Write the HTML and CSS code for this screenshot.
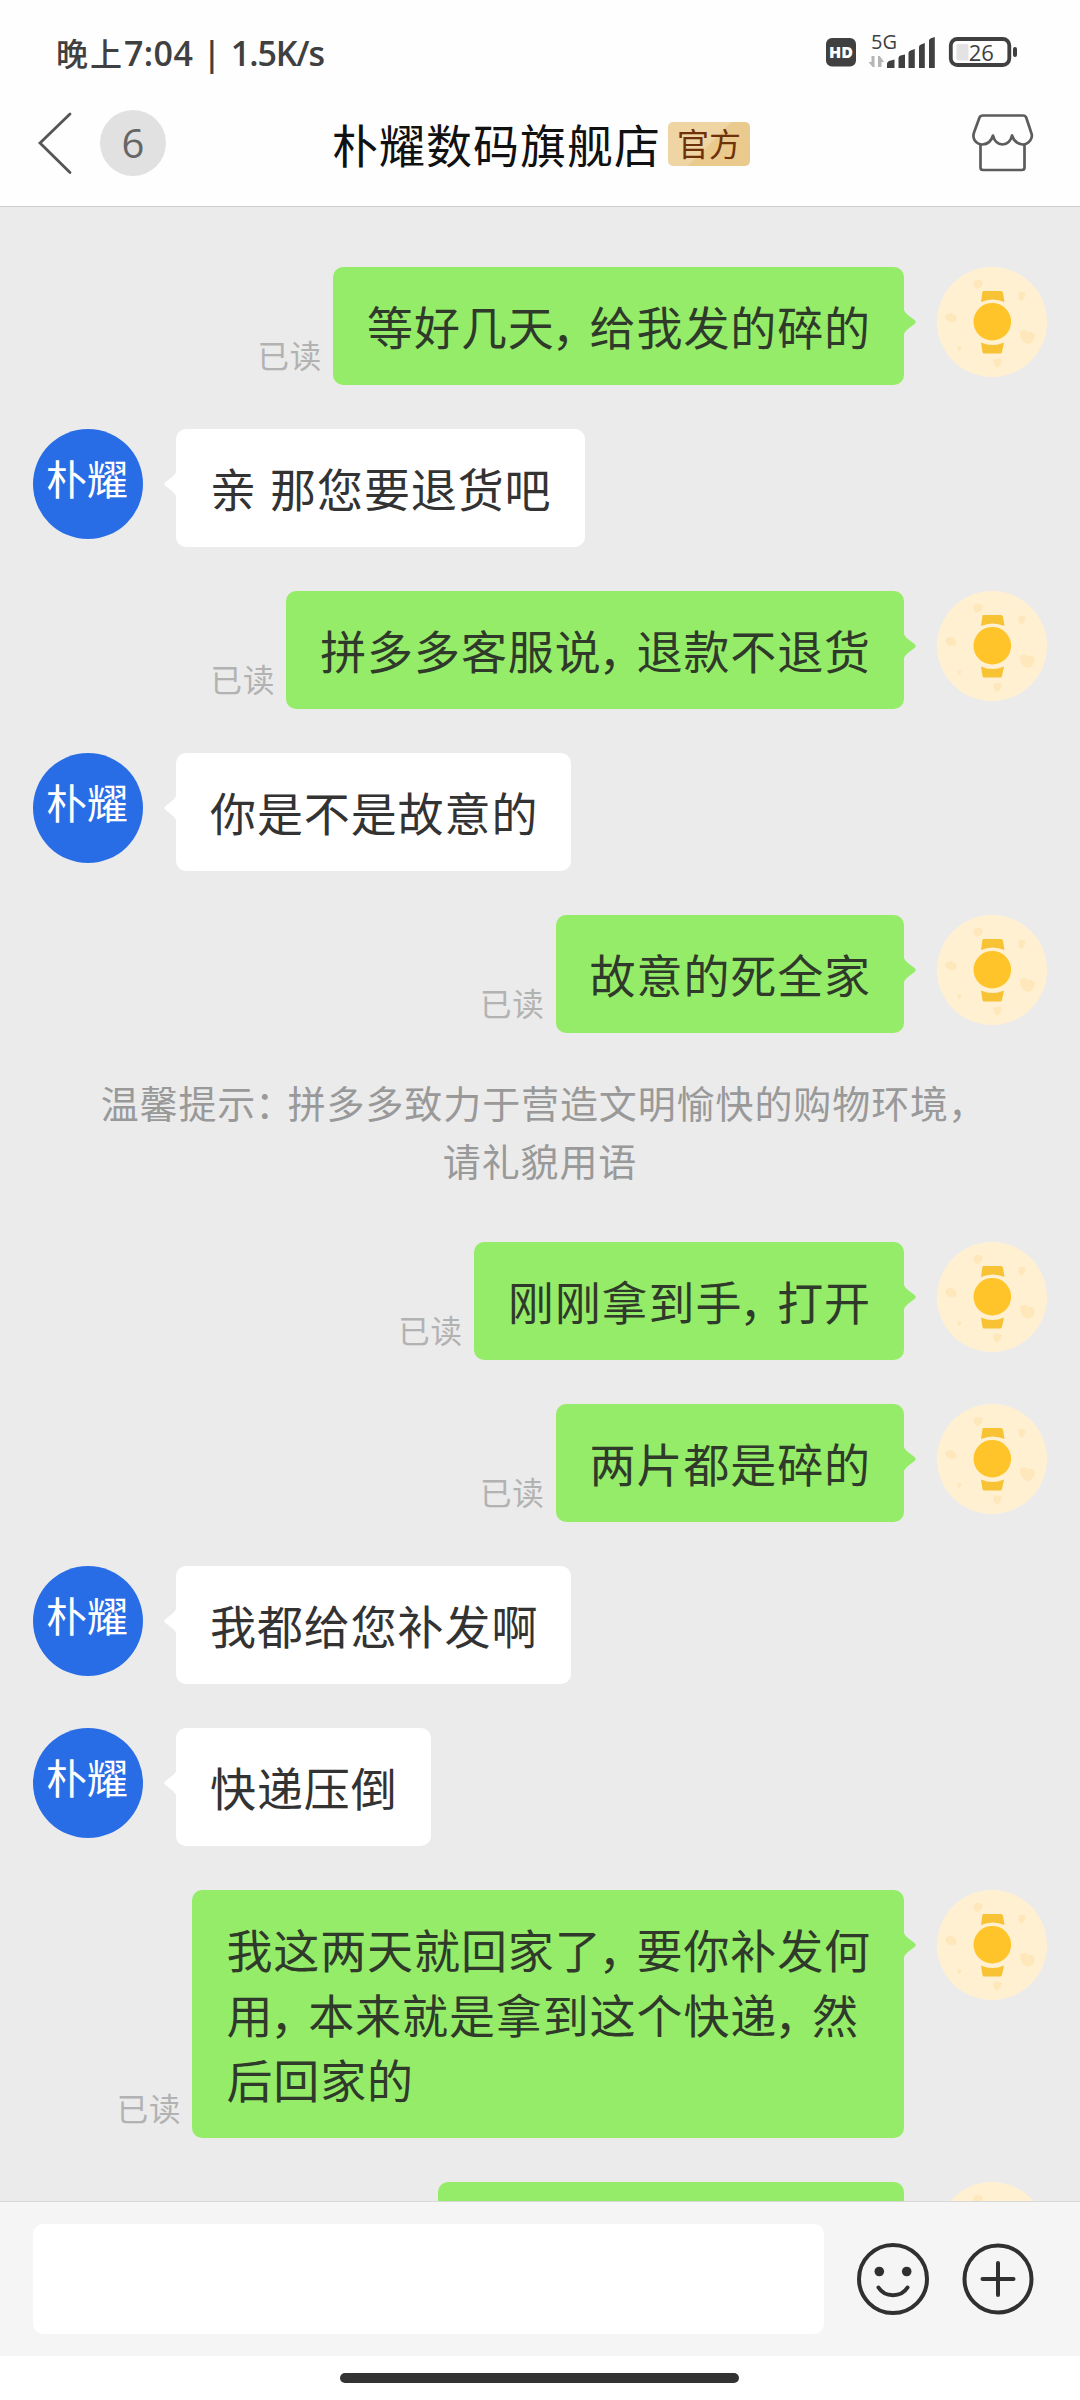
FILE: index.html
```html
<!DOCTYPE html>
<html lang="zh-CN">
<head>
<meta charset="utf-8">
<title>朴耀数码旗舰店</title>
<link rel="stylesheet" href="styles.css">
</head>
<body>
<svg class="defs" width="0" height="0" aria-hidden="true">
  <symbol id="watch" viewBox="0 0 110 110">
    <circle cx="55" cy="55" r="55" fill="#fff0d2"/>
    <g fill="#fee8bb">
      <path d="M37 14q5-3 9 1q-1 6-6 7q-5-3-3-8z"/>
      <path d="M82 25q4-1 7 1q-1 6-5 8q-4-4-2-9z"/>
      <path d="M8 49q5-6 11 0q2 6-4 6q-6 0-7-6z"/>
      <path d="M83 65q4-4 8 0q6-1 7 4q-1 7-8 8q-8-4-7-12z"/>
      <path d="M20 79l5 1l-3 5z"/>
      <path d="M56 93q5-3 9 0q-1 6-5 8q-4-3-4-8z"/>
    </g>
    <path d="M46 24h18q1.500 0 2 2l1.500 9q-12-5-23.500 0l1.300-9q.3-2 .7-2zM44 75.500q11.500 5 23 0l-2 9.500q-.5 1.500-1.500 1.500h-16.500q-1 0-1.500-1.500z" fill="#f7c234"/>
    <circle cx="55.300" cy="54.700" r="18.800" fill="#fec42a"/>
  </symbol>
</svg>

<header class="top">
  <div class="status">
    <div class="clock"><span class="cjk">晚上</span>7:04 | <span class="speed">1.5K/s</span></div>
    <svg class="indicators" width="194" height="60" viewBox="825 22 194 60">
      <rect x="826" y="38" width="30" height="28.500" rx="6" fill="#404040"/>
      <text x="841" y="58" class="hd" text-anchor="middle">HD</text>
      <text x="871" y="48.500" class="net">5G</text>
      <path d="M874.500 56v11h-1.800l-4.200-5h3v-6zM878 67v-11h1.800l4.200 6h-2.500v-1.500v6.500z" fill="#b5b5b5"/>
      <path d="M887 68v-4q0-2 2-3l5.500-1.500V68zM898.500 68V58q0-2 2-2.500l4.500-1V68zM908.500 68V53q0-2 2-2.500l4.300-1.500V68zM919 68V47q0-2 2-2.500l3.800-1.500V68zM929 68V40.500q0-1.500 2-2.200l3.800-1.300V68z" fill="#404040"/>
      <rect x="956.500" y="44" width="12" height="16.500" rx="2" fill="#e3e3e3"/>
      <rect x="950.800" y="39" width="58.500" height="26" rx="6.500" fill="none" stroke="#404040" stroke-width="3.800"/>
      <rect x="1013" y="47" width="4" height="10" rx="2" fill="#404040"/>
      <text x="981.300" y="61" class="pct" text-anchor="middle">26</text>
    </svg>
  </div>
  <div class="nav">
    <div class="back">
      <svg width="36" height="66" viewBox="37 110 36 66"><path d="M70 114L40 143l30 29.500" fill="none" stroke="#555" stroke-width="2.800" stroke-linecap="round"/></svg>
      <span class="unread">6</span>
    </div>
    <h1 class="title">朴耀数码旗舰店</h1>
    <span class="official">官方</span>
    <svg class="shop" width="64" height="62" viewBox="971 112 64 62" fill="none" stroke="#5c5c5c" stroke-width="2.700" stroke-linejoin="round">
      <path d="M983 115.500h40q2.500 0 3.200 2l4.800 14.500q2 4.500-.5 8q-3 4.500-8 4.500q-8-1-10.500-9q-2 8.500-9.500 9q-7.500-.5-9.500-9q-2.500 8.500-10.500 9q-5 0-8-4.500q-2-3.500-.3-8l5.300-14.500q.8-2 3.500-2z"/>
      <path d="M980.500 144v23.500q0 2.500 2.500 2.500h39q2.500 0 2.500-2.500V144"/>
    </svg>
  </div>
</header>

<main class="chat">
  <div class="row me"><span class="read">已读</span><div class="bubble">等好几天<i>，</i>给我发的碎的</div><svg class="avatar"><use href="#watch"/></svg></div>
  <div class="row shopkeeper"><div class="avatar logo">朴耀</div><div class="bubble">亲 那您要退货吧</div></div>
  <div class="row me"><span class="read">已读</span><div class="bubble">拼多多客服说<i>，</i>退款不退货</div><svg class="avatar"><use href="#watch"/></svg></div>
  <div class="row shopkeeper"><div class="avatar logo">朴耀</div><div class="bubble">你是不是故意的</div></div>
  <div class="row me"><span class="read">已读</span><div class="bubble">故意的死全家</div><svg class="avatar"><use href="#watch"/></svg></div>
  <p class="tip">温馨提示<i>：</i>拼多多致力于营造文明愉快的购物环境<i>，</i><br>请礼貌用语</p>
  <div class="row me"><span class="read">已读</span><div class="bubble">刚刚拿到手<i>，</i>打开</div><svg class="avatar"><use href="#watch"/></svg></div>
  <div class="row me"><span class="read">已读</span><div class="bubble">两片都是碎的</div><svg class="avatar"><use href="#watch"/></svg></div>
  <div class="row shopkeeper"><div class="avatar logo">朴耀</div><div class="bubble">我都给您补发啊</div></div>
  <div class="row shopkeeper"><div class="avatar logo">朴耀</div><div class="bubble">快递压倒</div></div>
  <div class="row me"><span class="read">已读</span><div class="bubble">我这两天就回家了<i>，</i>要你补发何<br>用<i>，</i>本来就是拿到这个快递<i>，</i>然<br>后回家的</div><svg class="avatar"><use href="#watch"/></svg></div>
  <div class="row me"><div class="bubble partial"></div><svg class="avatar"><use href="#watch"/></svg></div>
</main>

<footer class="composer">
  <div class="field"></div>
  <svg width="72" height="72" viewBox="-36 -36 72 72" fill="none" stroke="#303030" stroke-width="4" stroke-linecap="round">
    <circle r="34"/>
    <path d="M-14.500 8.500C-8 18.800 8 18.800 14.500 8.500"/>
    <circle cx="-13.700" cy="-7.500" r="4.800" fill="#303030" stroke="none"/>
    <circle cx="13.700" cy="-7.500" r="4.800" fill="#303030" stroke="none"/>
  </svg>
  <svg width="72" height="72" viewBox="-36 -36 72 72" fill="none" stroke="#303030" stroke-width="4" stroke-linecap="round">
    <circle r="33.500"/>
    <path d="M-15.500 0h31M0-16v32"/>
  </svg>
</footer>
<div class="home"><div class="pill"></div></div>
</body>
</html>
```
FILE: styles.css
```css
* { box-sizing: border-box; }

body {
  margin: 0;
  width: 1080px;
  height: 2400px;
  overflow: hidden;
  display: flex;
  flex-direction: column;
  background: #fff;
  color: #333;
  font-family: "Noto Sans CJK SC", sans-serif;
}

/* half-width punctuation, with a little air after it */
i {
  font-style: normal;
  font-feature-settings: "halt";
}

.defs { position: absolute; }

.top {
  height: 207px;
  border-bottom: 1px solid #cdcdcd;
  background: #fefefe;
}

.status {
  height: 104px;
  padding: 0 61px 0 56px;
  display: flex;
  align-items: center;
  justify-content: space-between;
  color: #404040;
}

.clock {
  font: 600 34px/50px "Open Sans", "Noto Sans CJK SC", sans-serif;
  letter-spacing: 0.4px;
  white-space: nowrap;
}

.clock .cjk {
  font-family: "Noto Sans CJK SC", sans-serif;
  font-weight: 500;
  font-size: 32px;
  letter-spacing: 2px;
}

.clock .speed { letter-spacing: -1.1px; }

.indicators text {
  font-family: "Open Sans", sans-serif;
  fill: #404040;
}

.indicators .hd { font-size: 16px; font-weight: 800; fill: #fff; }
.indicators .net { font-size: 20px; font-weight: 500; }
.indicators .pct { font-size: 22px; font-weight: 500; }

.nav {
  height: 78px;
  padding: 0 45px 0 37px;
  display: flex;
  align-items: center;
}

.back {
  width: 295px;
  display: flex;
  align-items: center;
  gap: 27px;
}

.unread {
  width: 66px;
  height: 66px;
  border-radius: 50%;
  background: #e1e1e1;
  color: #666;
  text-align: center;
  font: 500 40px/65px "Open Sans", sans-serif;
}

.title {
  margin: 0;
  width: 336px;
  font-size: 46px;
  font-weight: 400;
  line-height: 66px;
  letter-spacing: 1px;
  color: #111;
  white-space: nowrap;
}

.official {
  width: 82px;
  height: 44px;
  margin-top: 2px;
  border-radius: 5px;
  background: linear-gradient(135deg, #efd4a4 0%, #efd4a4 50%, #ebca8e 51%, #e9c98c 100%);
  color: #6f3208;
  text-align: center;
  font-size: 32px;
  line-height: 41px;
}

.shop { margin-left: auto; }

.chat {
  flex: 1;
  min-height: 0;
  overflow: hidden;
  padding: 60px 33px 0;
  background: #ebebeb;
  display: flex;
  flex-direction: column;
}

.row {
  flex: none;
  display: flex;
  align-items: flex-start;
  gap: 33px;
  margin-bottom: 44px;
}

.me { justify-content: flex-end; }

.avatar {
  flex: none;
  width: 110px;
  height: 110px;
}

.logo {
  padding-right: 2px;
  border-radius: 50%;
  background: #286de5;
  color: #fff;
  text-align: center;
  font-size: 41px;
  line-height: 97px;
}

.bubble {
  position: relative;
  min-height: 118px;
  padding: 26px 33px 27px 34px;
  border-radius: 10px;
  background: #fff;
  color: #333;
  font-size: 46px;
  line-height: 65px;
  letter-spacing: 0.9px;
  word-spacing: 2px;
  white-space: nowrap;
}

.bubble i { margin: 0 14px 0 -3px; }
.me .bubble { background: #95ec69; color: #2f3a2a; }
.partial { width: 466px; }

.bubble::before {
  content: "";
  position: absolute;
  top: 40px;
  left: -12px;
  width: 13px;
  height: 30px;
  background: inherit;
  clip-path: path("M13 0Q12 5 8 8L1.500 13Q-1 15 1.500 17L8 22Q12 25 13 30Z");
}

.me .bubble::before {
  left: auto;
  right: -12px;
  transform: scaleX(-1);
}

.read {
  align-self: flex-end;
  margin-right: -22px;
  margin-bottom: 8px;
  font-size: 31.5px;
  line-height: 46px;
  letter-spacing: 0.8px;
  color: #b2b2b2;
}

.tip {
  flex: none;
  margin: -4px 0 53px;
  text-align: center;
  font-size: 38px;
  line-height: 58px;
  letter-spacing: 0.9px;
  text-indent: 1px;
  color: #999;
  white-space: nowrap;
}

.tip i { margin: 0 12.500px 0 -1px; }

.composer {
  height: 155px;
  padding: 0 46px 0 33px;
  border-top: 1px solid #d8d8d8;
  background: #f5f5f5;
  display: flex;
  align-items: center;
  gap: 33px;
}

.field {
  flex: 1;
  height: 110px;
  border-radius: 10px;
  background: #fff;
}

.home {
  height: 44px;
  padding: 17px 0 0 340px;
  background: #fff;
}

.pill {
  width: 399px;
  height: 10px;
  border-radius: 5px;
  background: #333;
}
```
